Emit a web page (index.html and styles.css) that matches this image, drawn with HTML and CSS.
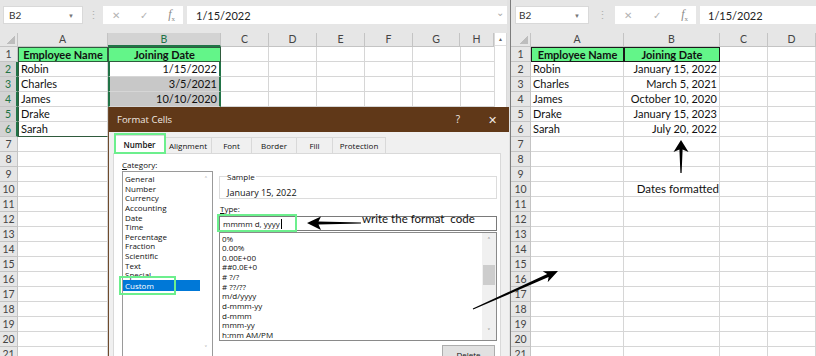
FILE: index.html
```html
<!DOCTYPE html>
<html>
<head>
<meta charset="utf-8">
<link rel="stylesheet" href="styles.css">
</head>
<body>
<div class="screen">
  <div class="pane pane-left">
    <div class="fbar">
      <div class="namebox"><span>B2</span><span class="dd">&#9660;</span></div>
      <div class="sep">&#8942;</div>
      <div class="fxbox"><span>&#10005;</span><span>&#10003;</span><span class="fx"><i>f</i><sub>x</sub></span></div>
      <div class="finput"><span>1/15/2022</span><span class="chev">&#8964;</span></div>
    </div>
    <div class="sheet">
      <div class="grid grid-left">
        <div class="row hrow"><div class="rh corner"></div><div class="ch la">A</div><div class="ch lb selh">B</div><div class="ch cn">C</div><div class="ch cn">D</div><div class="ch cn">E</div><div class="ch cn">F</div><div class="ch cg">G</div><div class="ch chh">H</div></div>
        <div class="row"><div class="rh">1</div><div class="c la hd tb">Employee Name</div><div class="c lb hd tb">Joining Date</div><div class="rest"></div></div>
        <div class="row"><div class="rh rsel">2</div><div class="c la tl">Robin</div><div class="c lb num sb">1/15/2022</div><div class="rest"></div></div>
        <div class="row"><div class="rh rsel">3</div><div class="c la tl">Charles</div><div class="c lb num sb gray">3/5/2021</div><div class="rest"></div></div>
        <div class="row"><div class="rh rsel">4</div><div class="c la tl">James</div><div class="c lb num sb gray">10/10/2020</div><div class="rest"></div></div>
        <div class="row"><div class="rh rsel">5</div><div class="c la tl">Drake</div><div class="c lb num sb gray">1/15/2023</div><div class="rest"></div></div>
        <div class="row"><div class="rh rsel">6</div><div class="c la tl tbot">Sarah</div><div class="c lb num sb sbot gray">7/20/2022</div><div class="rest"></div></div>
        <div class="row"><div class="rh">7</div><div class="c la"></div><div class="c lb"></div><div class="rest"></div></div>
        <div class="row"><div class="rh">8</div><div class="c la"></div><div class="c lb"></div><div class="rest"></div></div>
        <div class="row"><div class="rh">9</div><div class="c la"></div><div class="c lb"></div><div class="rest"></div></div>
        <div class="row"><div class="rh">10</div><div class="c la"></div><div class="c lb"></div><div class="rest"></div></div>
        <div class="row"><div class="rh">11</div><div class="c la"></div><div class="c lb"></div><div class="rest"></div></div>
        <div class="row"><div class="rh">12</div><div class="c la"></div><div class="c lb"></div><div class="rest"></div></div>
        <div class="row"><div class="rh">13</div><div class="c la"></div><div class="c lb"></div><div class="rest"></div></div>
        <div class="row"><div class="rh">14</div><div class="c la"></div><div class="c lb"></div><div class="rest"></div></div>
        <div class="row"><div class="rh">15</div><div class="c la"></div><div class="c lb"></div><div class="rest"></div></div>
        <div class="row"><div class="rh">16</div><div class="c la"></div><div class="c lb"></div><div class="rest"></div></div>
        <div class="row"><div class="rh">17</div><div class="c la"></div><div class="c lb"></div><div class="rest"></div></div>
        <div class="row"><div class="rh">18</div><div class="c la"></div><div class="c lb"></div><div class="rest"></div></div>
        <div class="row"><div class="rh">19</div><div class="c la"></div><div class="c lb"></div><div class="rest"></div></div>
        <div class="row"><div class="rh">20</div><div class="c la"></div><div class="c lb"></div><div class="rest"></div></div>
        <div class="row"><div class="rh">21</div><div class="c la"></div><div class="c lb"></div><div class="rest"></div></div>
      </div>
      <div class="vscroll"><div class="vs-up">&#9650;</div></div>
    </div>
  </div>

  <div class="divider"></div>

  <div class="pane pane-right">
    <div class="fbar fbar-right">
      <div class="namebox namebox-right"><span>B2</span><span class="dd">&#9660;</span></div>
      <div class="sep sep-right">&#8942;</div>
      <div class="fxbox fxbox-right"><span>&#10005;</span><span>&#10003;</span><span class="fx"><i>f</i><sub>x</sub></span></div>
      <div class="finput finput-right"><span>1/15/2022</span></div>
    </div>
    <div class="sheet">
      <div class="grid grid-right">
        <div class="row hrow"><div class="rh rh-r corner"></div><div class="ch ra">A</div><div class="ch rb">B</div><div class="ch cn">C</div><div class="ch cn">D</div></div>
        <div class="row"><div class="rh rh-r">1</div><div class="c ra hd hb">Employee Name</div><div class="c rb hd hb">Joining Date</div><div class="rest rest-r"></div></div>
        <div class="row"><div class="rh rh-r">2</div><div class="c ra">Robin</div><div class="c rb num">January 15, 2022</div><div class="rest rest-r"></div></div>
        <div class="row"><div class="rh rh-r">3</div><div class="c ra">Charles</div><div class="c rb num">March 5, 2021</div><div class="rest rest-r"></div></div>
        <div class="row"><div class="rh rh-r">4</div><div class="c ra">James</div><div class="c rb num">October 10, 2020</div><div class="rest rest-r"></div></div>
        <div class="row"><div class="rh rh-r">5</div><div class="c ra">Drake</div><div class="c rb num">January 15, 2023</div><div class="rest rest-r"></div></div>
        <div class="row"><div class="rh rh-r">6</div><div class="c ra">Sarah</div><div class="c rb num">July 20, 2022</div><div class="rest rest-r"></div></div>
        <div class="row"><div class="rh rh-r">7</div><div class="c ra"></div><div class="c rb"></div><div class="rest rest-r"></div></div>
        <div class="row"><div class="rh rh-r">8</div><div class="c ra"></div><div class="c rb"></div><div class="rest rest-r"></div></div>
        <div class="row"><div class="rh rh-r">9</div><div class="c ra"></div><div class="c rb"></div><div class="rest rest-r"></div></div>
        <div class="row"><div class="rh rh-r">10</div><div class="c ra"></div><div class="c rb num note-cell">Dates formatted</div><div class="rest rest-r"></div></div>
        <div class="row"><div class="rh rh-r">11</div><div class="c ra"></div><div class="c rb"></div><div class="rest rest-r"></div></div>
        <div class="row"><div class="rh rh-r">12</div><div class="c ra"></div><div class="c rb"></div><div class="rest rest-r"></div></div>
        <div class="row"><div class="rh rh-r">13</div><div class="c ra"></div><div class="c rb"></div><div class="rest rest-r"></div></div>
        <div class="row"><div class="rh rh-r">14</div><div class="c ra"></div><div class="c rb"></div><div class="rest rest-r"></div></div>
        <div class="row"><div class="rh rh-r">15</div><div class="c ra"></div><div class="c rb"></div><div class="rest rest-r"></div></div>
        <div class="row"><div class="rh rh-r">16</div><div class="c ra"></div><div class="c rb"></div><div class="rest rest-r"></div></div>
        <div class="row"><div class="rh rh-r">17</div><div class="c ra"></div><div class="c rb"></div><div class="rest rest-r"></div></div>
        <div class="row"><div class="rh rh-r">18</div><div class="c ra"></div><div class="c rb"></div><div class="rest rest-r"></div></div>
        <div class="row"><div class="rh rh-r">19</div><div class="c ra"></div><div class="c rb"></div><div class="rest rest-r"></div></div>
        <div class="row"><div class="rh rh-r">20</div><div class="c ra"></div><div class="c rb"></div><div class="rest rest-r"></div></div>
        <div class="row"><div class="rh rh-r">21</div><div class="c ra"></div><div class="c rb"></div><div class="rest rest-r"></div></div>
      </div>
    </div>
  </div>

  <div class="dialog">
    <div class="titlebar">
      <span class="title">Format Cells</span>
      <div class="tbtns"><span class="tbtn">?</span><span class="tbtn tclose">&#10005;</span></div>
    </div>
    <div class="tabs">
      <div class="tab active t-num">Number</div>
      <div class="tab t-ali">Alignment</div>
      <div class="tab t-font">Font</div>
      <div class="tab t-bor">Border</div>
      <div class="tab t-fill">Fill</div>
      <div class="tab t-pro">Protection</div>
    </div>
    <div class="panel">
      <div class="catcol">
        <div class="lbl"><u>C</u>ategory:</div>
        <div class="listbox catlist">
          <div class="item">General</div>
          <div class="item">Number</div>
          <div class="item">Currency</div>
          <div class="item">Accounting</div>
          <div class="item">Date</div>
          <div class="item">Time</div>
          <div class="item">Percentage</div>
          <div class="item">Fraction</div>
          <div class="item">Scientific</div>
          <div class="item">Text</div>
          <div class="item">Special</div>
          <div class="item selitem">Custom</div>
          <div class="lscroll"><span>&#708;</span><span>&#709;</span></div>
        </div>
      </div>
      <div class="maincol">
        <div class="group">
          <div class="legend">Sample</div>
          <div class="sample">January 15, 2022</div>
        </div>
        <div class="lbl typelbl"><u>T</u>ype:</div>
        <div class="typein">mmmm d, yyyy<span class="caret"></span></div>
        <div class="listbox fmtlist">
          <div class="item">0%</div>
          <div class="item">0.00%</div>
          <div class="item">0.00E+00</div>
          <div class="item">##0.0E+0</div>
          <div class="item"># ?/?</div>
          <div class="item"># ??/??</div>
          <div class="item">m/d/yyyy</div>
          <div class="item">d-mmm-yy</div>
          <div class="item">d-mmm</div>
          <div class="item">mmm-yy</div>
          <div class="item">h:mm AM/PM</div>
          <div class="fscroll"><span>&#708;</span><span class="thumb"></span><span>&#709;</span></div>
        </div>
        <div class="btnrow"><div class="btn">Delete</div></div>
      </div>
    </div>
  </div>

  <div class="hl hl-tab"></div>
  <div class="hl hl-custom"></div>
  <div class="hl hl-type"></div>

  <div class="note">write the format  code</div>

  <svg class="arrows" width="816" height="356" viewBox="0 0 816 356">
    <polygon points="307,223 321,216.5 318.5,221.6 361,222.6 361,223.6 318.5,224.6 321,230" fill="#000"/>
    <polygon points="681,140 688.5,152 682.6,149.5 681.6,173 680.4,173 679.4,149.5 673.5,152" fill="#000"/>
    <polygon points="558,271 547.7,282.2 548.6,277.1 473.2,309.4 472.8,308.6 547.2,273.9 542.7,271.2" fill="#000"/>
  </svg>
</div>
</body>
</html>
```
FILE: styles.css
```css
* { box-sizing: border-box; }
body {
  margin: 0;
  width: 816px;
  height: 356px;
  overflow: hidden;
  background: #fff;
  font-family: Lato, "Liberation Sans", sans-serif;
}
.screen {
  position: relative;
  display: flex;
  width: 816px;
  height: 356px;
  overflow: hidden;
}
.pane {
  display: flex;
  flex-direction: column;
  height: 356px;
  overflow: hidden;
}
.pane-left { width: 507px; flex: none; }
.pane-right { flex: 1; }
.divider {
  width: 4px;
  flex: none;
  background: #e2e2e2;
  border-right: 1px solid #7c7c7c;
}

/* formula bar */
.fbar {
  height: 33px;
  flex: none;
  background: #e6e6e6;
  display: flex;
  align-items: flex-start;
  padding: 6px 0 0 3px;
}
.fbar-right { padding-left: 4px; }
.namebox {
  width: 80px;
  height: 18px;
  background: #fff;
  border: 1px solid #d9d9d9;
  display: flex;
  align-items: center;
  justify-content: space-between;
  padding: 0 8px 0 5px;
  font-size: 10px;
  color: #333;
}
.namebox-right { width: 74px; padding-left: 3px; }
.dd { font-size: 6px; color: #777; }
.sep {
  width: 20px;
  text-align: center;
  color: #b0b0b0;
  font-size: 11px;
  line-height: 18px;
}
.sep-right { width: 26px; }
.fxbox {
  width: 80px;
  height: 18px;
  background: #fff;
  display: flex;
  align-items: center;
  justify-content: space-between;
  padding: 0 8px 0 9px;
  color: #b3b3b3;
  font-size: 10px;
}
.fxbox-right { width: 81px; }
.fx { font-family: "Liberation Serif", serif; font-size: 12px; color: #8a8a8a; }
.fx sub { font-size: 7px; }
.finput {
  margin-left: 4px;
  flex: 1;
  height: 18px;
  background: #fff;
  display: flex;
  align-items: center;
  justify-content: space-between;
  padding: 0 3px 0 9px;
  font-size: 11px;
  color: #222;
}
.finput-right { padding-left: 8px; }
.chev { color: #aaa; font-size: 10px; line-height: 10px; padding-bottom: 6px; }

/* sheet grid */
.sheet { display: flex; flex: 1; }
.grid { flex: none; }
.grid-left { width: 494px; }
.grid-right { width: 305px; }
.row { display: flex; height: 15px; }
.row > div {
  height: 15px;
  border-right: 1px solid #d6d6d6;
  border-bottom: 1px solid #d6d6d6;
  line-height: 14px;
  font-size: 11px;
  white-space: nowrap;
  overflow: hidden;
  color: #111;
}
.hrow { height: 14px; }
.hrow > div { height: 14px; line-height: 13px; }
.ch {
  background: #e6e6e6;
  border-color: #c4c4c4 !important;
  text-align: center;
  color: #444 !important;
  font-size: 10.5px !important;
}
.rh {
  width: 18px;
  flex: none;
  background: #e6e6e6;
  border-color: #c4c4c4 !important;
  text-align: center;
  color: #444 !important;
  font-size: 10.5px !important;
}
.rh-r { width: 20px; }
.corner {
  background: #e6e6e6 linear-gradient(to bottom right, transparent 50%, #bdbdbd 50%) no-repeat right 2px bottom 2px / 9px 9px;
}
.rsel { background: #d3d3d3; color: #217346 !important; border-right: 2px solid #217346 !important; }
.selh { background: #d3d3d3; color: #217346 !important; border-bottom: 2px solid #217346 !important; }
.la { width: 90px; flex: none; padding: 0 2px; }
.lb { width: 113px; flex: none; padding: 0 2px; }
.ra { width: 93px; flex: none; padding: 0 2px; }
.rb { width: 96px; flex: none; padding: 0 2px; }
.cn { width: 48px; flex: none; }
.cg { width: 47px; flex: none; }
.chh { width: 34px; flex: none; }
.rest {
  flex: 1;
  border-right: none !important;
  background: repeating-linear-gradient(90deg, transparent 0 47px, #d6d6d6 47px 48px);
}
.hd {
  background: #63f589;
  font-weight: 700;
  text-align: center;
}
.tb { border: 1px solid #2f5a3d !important; }
.hb { border: 1px solid #1a1a1a !important; }
.tl { border-left: 1px solid #2f5a3d; }
.tbot { border-bottom-color: #2f5a3d !important; }
.num { text-align: right; }
.sb { border-left: 2px solid #217346; border-right: 2px solid #217346 !important; }
.sbot { border-bottom: 2px solid #217346 !important; }
.gray { background: #c8c8c8; }
.note-cell { overflow: visible !important; padding-right: 0 !important; font-size: 11.5px !important; }

.vscroll {
  width: 13px;
  flex: none;
  background: #fff;
  border-left: 1px solid #d9d9d9;
  border-right: 1px solid #d9d9d9;
}
.vs-up {
  height: 13px;
  border-bottom: 1px solid #e0e0e0;
  font-size: 5px;
  line-height: 12px;
  text-align: center;
  color: #606060;
}

/* dialog */
.dialog {
  position: absolute;
  left: 108px;
  top: 107px;
  width: 401px;
  height: 260px;
  background: #f0f0f0;
  border-left: 1px solid #6e4a2c;
  font-family: "Open Sans", "Noto Sans", sans-serif;
  color: #111;
}
.titlebar {
  height: 25px;
  background: #603818;
  color: #f1e9e2;
  display: flex;
  align-items: center;
  padding-left: 8px;
  font-size: 9.5px;
}
.tbtns { margin-left: auto; display: flex; gap: 20px; padding-right: 10px; }
.tbtn { width: 14px; text-align: center; font-size: 10px; }
.tclose { font-size: 11px; }
.tabs {
  display: flex;
  margin: 5px 0 0 5px;
  height: 16px;
  align-items: flex-end;
}
.tab {
  height: 16px;
  border: 1px solid #d9d9d9;
  border-bottom: none;
  border-left: none;
  background: #f0f0f0;
  font-size: 8px;
  line-height: 15px;
  text-align: center;
}
.tab.active { background: #fff; border-left: 1px solid #d9d9d9; height: 18px; line-height: 17px; font-weight: 600; }
.t-num { width: 51px; }
.t-ali { width: 47px; }
.t-font { width: 40px; }
.t-bor { width: 45px; }
.t-fill { width: 36px; }
.t-pro { width: 53px; }
.panel {
  margin-left: 4px;
  width: 388px;
  height: 220px;
  background: #fff;
  border: 1px solid #d9d9d9;
  display: flex;
  padding: 4px 0 0 8px;
}
.lbl { font-size: 8px; line-height: 13px; height: 13px; }
.catcol { width: 91px; flex: none; }
.listbox {
  position: relative;
  background: #fff;
  border: 1px solid #9a9a9a;
}
.catlist { height: 200px; padding-top: 2px; }
.item {
  font-size: 8px;
  line-height: 9.65px;
  height: 9.65px;
  padding-left: 2px;
  white-space: nowrap;
}
.selitem {
  background: #0078d7;
  color: #fff;
  width: 77px;
  height: 11px;
  line-height: 11px;
  margin-top: -0.5px;
}
.lscroll {
  position: absolute;
  right: 0;
  top: 0;
  width: 12px;
  height: 185px;
  display: flex;
  flex-direction: column;
  justify-content: space-between;
  align-items: center;
  color: #999;
  font-size: 8px;
  line-height: 12px;
  padding: 2px 0;
}
.maincol {
  width: 278px;
  flex: none;
  margin-left: 6px;
  display: flex;
  flex-direction: column;
}
.group {
  margin-top: 18px;
  height: 23px;
  border: 1px solid #dcdcdc;
  padding: 0 7px;
}
.legend {
  display: table;
  margin-top: -6px;
  background: #fff;
  padding: 0 1px 0 0;
  font-size: 8px;
  line-height: 11px;
}
.sample { font-size: 9px; line-height: 11px; margin-top: 4.5px; }
.typelbl { margin-top: 3px; padding-left: 1px; }
.typein {
  margin-top: 1px;
  height: 15px;
  border: 1px solid #7a7a7a;
  font-size: 8px;
  line-height: 13px;
  padding-left: 3px;
  display: flex;
  align-items: center;
}
.caret { width: 1px; height: 10px; background: #000; margin-left: 1px; }
.fmtlist { margin-top: 1px; height: 109px; padding-top: 0.5px; border-color: #8a8a8a; }
.fscroll {
  position: absolute;
  right: 0;
  top: 0;
  bottom: 0;
  width: 14px;
  background: #f0f0f0;
  display: flex;
  flex-direction: column;
  align-items: center;
  color: #666;
  font-size: 8px;
  line-height: 12px;
  padding: 2px 0;
}
.thumb {
  width: 12px;
  height: 20px;
  background: #cdcdcd;
  margin: 18px 0 auto;
}
.btnrow { display: flex; justify-content: flex-end; margin-top: 4px; padding-right: 2px; }
.btn {
  width: 53px;
  height: 20px;
  background: #e1e1e1;
  border: 1px solid #adadad;
  font-size: 8px;
  line-height: 18px;
  text-align: center;
}

/* annotations */
.hl {
  position: absolute;
  border: 2px solid #6cef8d;
}
.hl-tab { left: 114px; top: 133px; width: 52px; height: 21px; }
.hl-custom { left: 119px; top: 276px; width: 57px; height: 19px; }
.hl-type { left: 217px; top: 214px; width: 80px; height: 18px; }
.note {
  position: absolute;
  left: 362px;
  top: 212px;
  font-size: 11.5px;
  line-height: 14px;
  white-space: pre;
  color: #111;
}
.arrows { position: absolute; left: 0; top: 0; pointer-events: none; }
```
